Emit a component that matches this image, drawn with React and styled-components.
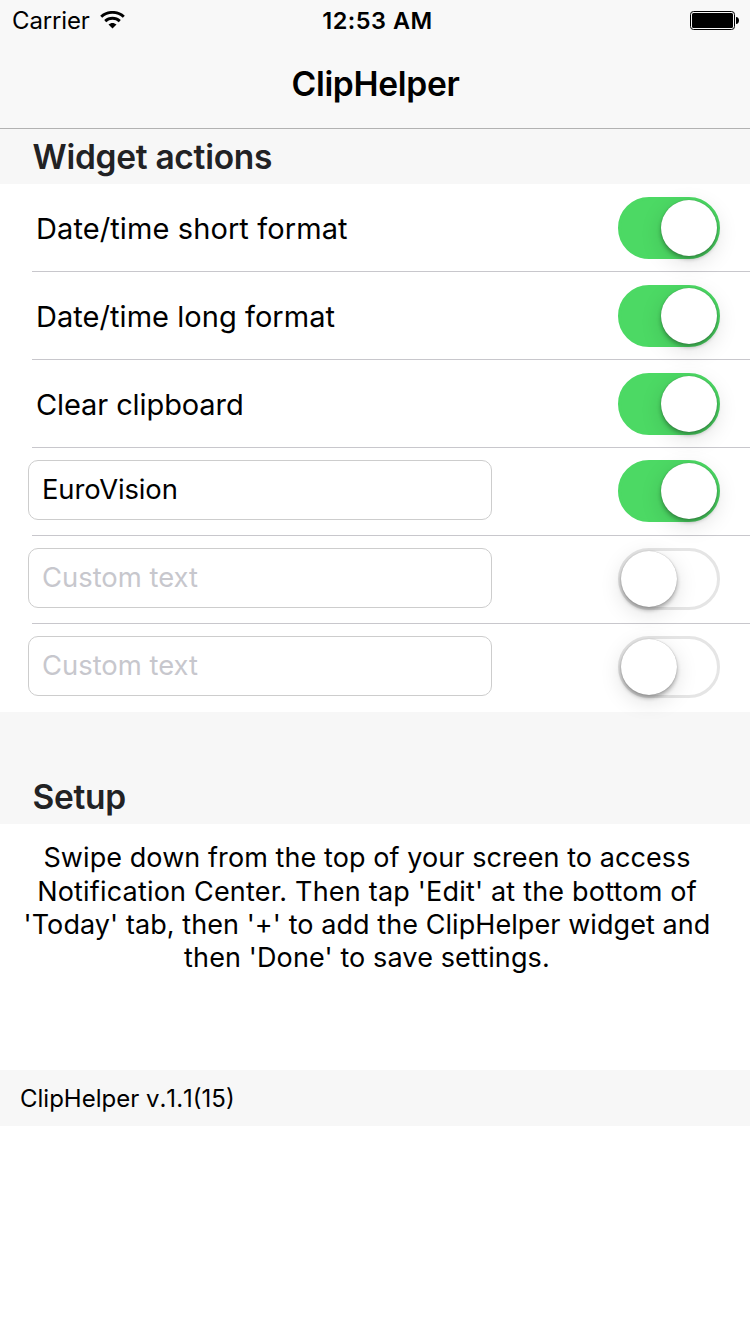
import React from 'react';
import styled, { createGlobalStyle } from 'styled-components';

const Global = createGlobalStyle`
  * { box-sizing: border-box; }
  body { margin: 0; background: #fff; color: #000; font-family: Inter, "Liberation Sans", sans-serif; }
`;
const Screen = styled.main`width: 750px; height: 1334px; background: #fff; overflow: hidden;`;
const Header = styled.header`height: 129px; background: #f8f8f8; border-bottom: 1px solid #b2b2b2;`;
const StatusBar = styled.div`
  height: 41px; padding: 1px 11px 0 12px; display: grid; grid-template-columns: 1fr auto 1fr; align-items: center;
  font-size: 24px; line-height: 40px;
`;
const Carrier = styled.div`
  display: flex; align-items: center; gap: 10px; letter-spacing: -0.15px;
  svg { margin-bottom: 2px; }
`;
const Clock = styled.div`font-weight: 600; font-size: 23.5px; letter-spacing: 0.5px; padding-left: 4px;`;
const Battery = styled.div`display: flex; justify-content: flex-end; padding-bottom: 2px;`;
const Title = styled.h1`margin: 0; padding-left: 1px; font-size: 33.6px; line-height: 86px; font-weight: 600; text-align: center; letter-spacing: -0.3px;`;
const SectionTitle = styled.h2`
  margin: 0; height: ${p => p.$height}px; padding: ${p => p.$top}px 0 0 32.5px; background: #f7f7f7; color: #222224;
  font-size: 33.5px; line-height: 57px; font-weight: 600; letter-spacing: -0.28px;
`;
const Row = styled.div`
  height: 88px; margin-left: 32px; border-bottom: 1px solid ${p => (p.$last ? 'transparent' : '#c8c7cc')};
  display: flex; justify-content: space-between; align-items: center; padding-right: 30px;
`;
const Label = styled.span`font-size: 29px; margin-left: 4px; padding-top: 2px; line-height: 34px; letter-spacing: ${p => p.$ls}px;`;
const Input = styled.input`
  width: 464px; height: 60px; margin: -3px 0 0 -4px; padding: 0 13px 3px; border: 1px solid #cdcdcd; border-radius: 10px;
  font: 400 27.4px/34px Inter, sans-serif; color: #000; background: #fff; outline: 0; letter-spacing: ${p => p.$ls}px;
  &::placeholder { color: #c7c7cd; opacity: 1; }
`;
const Toggle = styled.button`
  width: 102px; height: 62px; border-radius: 31px; padding: 0; display: flex; align-items: center;
  border: 3px solid ${p => (p.$on ? '#4cd964' : '#e5e5e5')}; background: ${p => (p.$on ? '#4cd964' : '#fff')};
  justify-content: ${p => (p.$on ? 'flex-end' : 'flex-start')}; margin-top: ${p => (p.$raised ? -1 : 1)}px;
`;
const Knob = styled.span`width: 56px; height: 56px; border-radius: 50%; background: #fff; box-shadow: 0 6px 22px rgba(0,0,0,.13), 0 3px 4px rgba(0,0,0,.3), 0 0 1px rgba(0,0,0,.3);`;
const Instructions = styled.div`height: 246px; padding-top: 17px; text-align: center; width: 734px; font-size: 27px; line-height: 33.4px;`;
const Line = styled.div`white-space: nowrap; letter-spacing: ${p => p.$ls}px; line-height: ${p => p.$lh || 33}px;`;
const Footer = styled.footer`height: 56px; background: #f7f7f7; padding-left: 20px; font-size: 24px; line-height: 58px;`;
const Version = styled.span`letter-spacing: 0; font-kerning: none;`;

const labels = [['Date/time short format', 0.1], ['Date/time long format', 0.05], ['Clear clipboard', -0.1]];
const fields = ['EuroVision', '', ''];

function Switch({ on, raised }) {
  return <Toggle $on={on} $raised={raised} role="switch" aria-checked={on}><Knob /></Toggle>;
}

export default function App() {
  return (
    <Screen>
      <Global />
      <Header>
        <StatusBar>
          <Carrier><span>Carrier</span>
            <svg width="25" height="18" viewBox="0 0 25 18" fill="none" stroke="#000" strokeWidth="2.9">
              <path d="M1.2 5.8C7.4-.1 17.6-.1 23.8 5.8M5.2 10.1C9.4 6.3 15.6 6.3 19.8 10.1" /><path d="M8.5 13.6c2.4-2.1 5.6-2.1 8 0l-4 4Z" fill="#000" stroke="none" />
            </svg>
          </Carrier>
          <Clock>12:53 AM</Clock>
          <Battery><svg width="49" height="19" viewBox="0 0 49 19"><rect x=".5" y=".5" width="44" height="18" rx="3" fill="none" stroke="#000" /><rect x="2" y="2" width="41" height="15" rx="1.5" /><path d="M46 6c4 0 4 7 0 7Z" /></svg></Battery>
        </StatusBar>
        <Title>ClipHelper</Title>
      </Header>
      <SectionTitle $height={55} $top={0}>Widget actions</SectionTitle>
      {labels.map(([t, ls]) => <Row key={t}><Label $ls={ls}>{t}</Label><Switch on /></Row>)}
      {fields.map((v, i) => <Row key={i} $last={i === 2}><Input $ls={v ? -0.1 : 0} defaultValue={v} placeholder="Custom text" /><Switch on={i === 0} raised /></Row>)}
      <SectionTitle $height={112} $top={57}>Setup</SectionTitle>
      <Instructions>
        <Line $ls={0.08} $lh={34}>Swipe down from the top of your screen to access</Line>
        <Line $ls={0.19}>Notification Center. Then tap 'Edit' at the bottom of</Line>
        <Line $ls={0.07}>'Today' tab, then '+' to add the ClipHelper widget and</Line>
        <Line $ls={0.12}>then 'Done' to save settings.</Line>
      </Instructions>
      <Footer>ClipHelper <Version>v.1.1(15)</Version></Footer>
    </Screen>
  );
}
